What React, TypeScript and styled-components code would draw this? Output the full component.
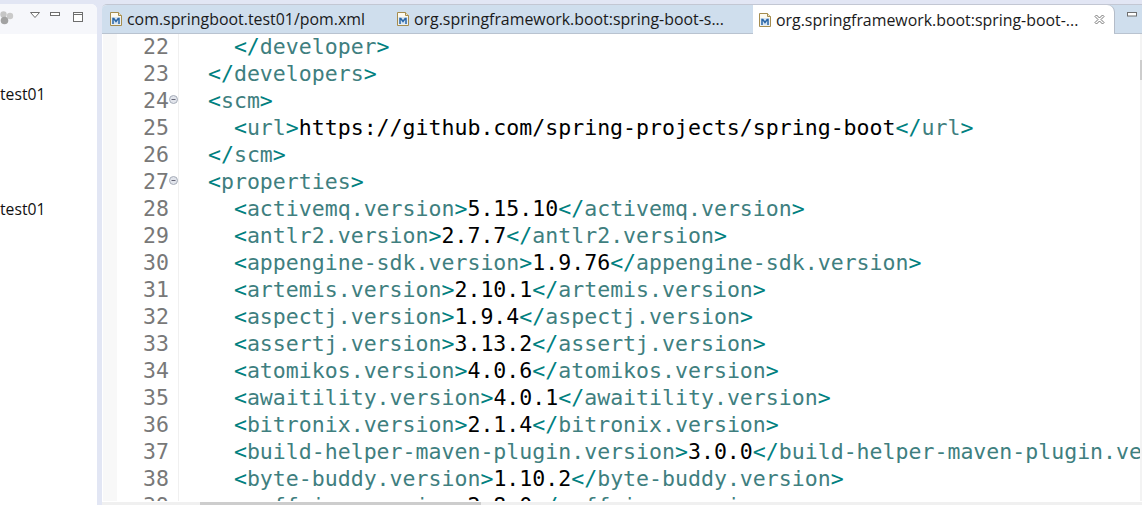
import React from "react";
import styled, { createGlobalStyle } from "styled-components";

const Global = createGlobalStyle`
  html, body { margin: 0; padding: 0; background: #fff; }
  #root { width: 1142px; height: 505px; overflow: hidden; }
`;

const Page = styled.div`
  display: flex;
  width: 1142px;
  height: 505px;
  overflow: hidden;
  background: #e2e6f4;
`;

const Sidebar = styled.aside`
  width: 97px;
  margin-top: 4px;
  flex: none;
  display: flex;
  flex-direction: column;
  background: #fff;
  border-top-right-radius: 6px;
  overflow: hidden;
  font-family: "Open Sans", sans-serif;
  font-size: 15.7px;
  color: #111;
`;

const SideHeader = styled.div`
  height: 30px;
  flex: none;
  display: flex;
  align-items: flex-start;
  padding-top: 7px;
  box-sizing: border-box;
  background: #f6f7fb;
`;

const SideList = styled.div`
  display: flex;
  flex-direction: column;
  gap: 95px;
  padding: 50px 0 0 0;
  line-height: 20px;
`;

const Divider = styled.div`
  width: 5px;
  flex: none;
`;

const EditorPane = styled.main`
  flex: 1;
  min-width: 0;
  margin-top: 4px;
  display: flex;
  flex-direction: column;
  background: #fff;
  border-top: 1px solid #c3c7d3;
  border-top-left-radius: 5px;
  overflow: hidden;
`;

const TabBar = styled.div`
  height: 29px;
  flex: none;
  display: flex;
  background: #cfdeed;
  font-family: "Open Sans", sans-serif;
  font-size: 15.9px;
  color: #1a1a1a;
`;

const Tab = styled.div<{ $w: number; $inset: number; $active?: boolean }>`
  width: ${(p) => p.$w}px;
  flex: none;
  display: flex;
  align-items: center;
  gap: 5px;
  padding-left: ${(p) => p.$inset}px;
  box-sizing: border-box;
  white-space: nowrap;
  overflow: hidden;
  background: ${(p) => (p.$active ? "#fff" : "transparent")};
  border-bottom: ${(p) => (p.$active ? "none" : "1px solid #b9c3d0")};
  border-top-right-radius: ${(p) => (p.$active ? "7px" : "0")};
  box-shadow: ${(p) => (p.$active ? "1px 0 0 #b4bcc8" : "none")};
`;

const TabLabel = styled.span`
  flex: none;
`;

const TabClose = styled.svg`
  width: 11px;
  height: 11px;
  margin-left: 11px;
  flex: none;
`;

const TabRest = styled.div`
  flex: 1;
  display: flex;
  justify-content: flex-end;
  padding: 7px 5px 0 0;
  border-bottom: 1px solid #b9c3d0;
`;

const EditorBody = styled.div`
  flex: 1;
  min-height: 0;
  display: flex;
  flex-direction: column;
  background: #fff;
`;

const EditorRow = styled.div`
  flex: 1;
  min-height: 0;
  display: flex;
`;

const Ruler = styled.div`
  width: 14px;
  margin-left: 1px;
  flex: none;
  background: #f8f8f8;
`;

const Gutter = styled.div`
  width: 61px;
  flex: none;
  border-right: 1px solid #f0f0f0;
  overflow: hidden;
`;

const NumberRow = styled.div`
  position: relative;
  height: 27px;
  padding-left: 26px;
  font: 21.5px/25px "DejaVu Sans Mono", monospace;
  color: #787878;
`;

const FoldMark = styled.svg`
  position: absolute;
  left: 52px;
  top: 7px;
  width: 9px;
  height: 9px;
`;

const Code = styled.pre`
  flex: 1;
  min-width: 0;
  margin: 0;
  padding-left: 3px;
  overflow: hidden;
  font: 21.55px/25px "DejaVu Sans Mono", monospace;
  color: #000;
`;

const CodeLine = styled.div`
  height: 27px;
  white-space: pre;
`;

const Bracket = styled.span`
  color: #008080;
`;

const TagName = styled.span`
  color: #3f7f7f;
`;

const VScroll = styled.div`
  width: 2px;
  flex: none;
  background: #f3f3f3;
  padding-top: 26px;
`;

const VThumb = styled.div`
  height: 20px;
  background: #cdcdcd;
`;

const HScroll = styled.div`
  height: 4px;
  flex: none;
  box-sizing: border-box;
  display: flex;
  background: #f0f0f0;
  border-top: 1px solid #fff;
  padding-left: 98px;
`;

const HThumb = styled.div`
  width: 281px;
  background: #cdcdcd;
`;

const MavenIcon = () => (
  <svg width="12" height="14" viewBox="0 0 12 14" style={{ flex: "none" }}>
    <path d="M.5.5h8l3 3v10H.5z" fill="#fdfaf0" stroke="#a58c4e" />
    <path d="M8.5.5v3h3" fill="#efe6c8" stroke="#a58c4e" />
    <rect x="1.5" y="5" width="9" height="7.5" fill="#d6e4f2" />
    <path d="M3 12V6.5h.8L6 9.5l2.2-3H9V12" fill="none" stroke="#2a66a6" strokeWidth="1.5" />
  </svg>
);

const Line = ({ indent, tag, value }: { indent: number; tag: string; value?: string }) => {
  const pad = " ".repeat(indent);
  if (tag.startsWith("/"))
    return (
      <CodeLine>
        {pad}
        <Bracket>&lt;/</Bracket>
        <TagName>{tag.slice(1)}</TagName>
        <Bracket>&gt;</Bracket>
      </CodeLine>
    );
  return (
    <CodeLine>
      {pad}
      <Bracket>&lt;</Bracket>
      <TagName>{tag}</TagName>
      <Bracket>&gt;</Bracket>
      {value !== undefined && (
        <>
          {value}
          <Bracket>&lt;/</Bracket>
          <TagName>{tag}</TagName>
          <Bracket>&gt;</Bracket>
        </>
      )}
    </CodeLine>
  );
};

const lines: { indent: number; tag: string; value?: string; fold?: boolean }[] = [
  { indent: 4, tag: "/developer" },
  { indent: 2, tag: "/developers" },
  { indent: 2, tag: "scm", fold: true },
  { indent: 4, tag: "url", value: "https://github.com/spring-projects/spring-boot" },
  { indent: 2, tag: "/scm" },
  { indent: 2, tag: "properties", fold: true },
  { indent: 4, tag: "activemq.version", value: "5.15.10" },
  { indent: 4, tag: "antlr2.version", value: "2.7.7" },
  { indent: 4, tag: "appengine-sdk.version", value: "1.9.76" },
  { indent: 4, tag: "artemis.version", value: "2.10.1" },
  { indent: 4, tag: "aspectj.version", value: "1.9.4" },
  { indent: 4, tag: "assertj.version", value: "3.13.2" },
  { indent: 4, tag: "atomikos.version", value: "4.0.6" },
  { indent: 4, tag: "awaitility.version", value: "4.0.1" },
  { indent: 4, tag: "bitronix.version", value: "2.1.4" },
  { indent: 4, tag: "build-helper-maven-plugin.version", value: "3.0.0" },
  { indent: 4, tag: "byte-buddy.version", value: "1.10.2" },
  { indent: 4, tag: "caffeine.version", value: "2.8.0" },
];

export default function App() {
  return (
    <Page>
      <Global />
      <Sidebar>
        <SideHeader>
          <svg width="86" height="15" viewBox="0 0 86 15" style={{ flex: "none" }}>
            <circle cx="3.5" cy="3.5" r="3.2" fill="#c6c6c6" />
            <circle cx="10" cy="5" r="3.2" fill="#cacaca" />
            <circle cx="4.5" cy="9.5" r="3.8" fill="#a2a2a2" />
            <path d="M30.5 1.5h9l-4.5 5z" fill="#fff" stroke="#6e6e6e" />
            <rect x="50.5" y="1.5" width="9" height="3" fill="#fff" stroke="#6e6e6e" />
            <rect x="73.5" y="1.5" width="9" height="9" fill="#fff" stroke="#6e6e6e" />
            <path d="M73.5 3.5h9" stroke="#6e6e6e" />
          </svg>
        </SideHeader>
        <SideList>
          <span>test01</span>
          <span>test01</span>
        </SideList>
      </Sidebar>
      <Divider />
      <EditorPane>
        <TabBar>
          <Tab $w={283} $inset={8}>
            <MavenIcon />
            <TabLabel>com.springboot.test01/pom.xml</TabLabel>
          </Tab>
          <Tab $w={368} $inset={12}>
            <MavenIcon />
            <TabLabel>org.springframework.boot:spring-boot-s...</TabLabel>
          </Tab>
          <Tab $w={361} $inset={6} $active>
            <MavenIcon />
            <TabLabel>org.springframework.boot:spring-boot-...</TabLabel>
            <TabClose viewBox="0 0 11 11">
              <path d="M1 2.5 2.5 1 5.5 4 8.5 1 10 2.5 7 5.5 10 8.5 8.5 10 5.5 7 2.5 10 1 8.5 4 5.5z" fill="#fff" stroke="#777" />
            </TabClose>
          </Tab>
          <TabRest>
            <svg width="10" height="5" viewBox="0 0 10 5">
              <rect x=".5" y=".5" width="9" height="3.5" fill="#fff" stroke="#6e6e6e" />
            </svg>
          </TabRest>
        </TabBar>
        <EditorBody>
          <EditorRow>
            <Ruler />
            <Gutter>
              {lines.map((l, i) => (
                <NumberRow key={i}>
                  {22 + i}
                  {l.fold && (
                    <FoldMark viewBox="0 0 9 9">
                      <circle cx="4.5" cy="4.5" r="4" fill="#e2e5ec" stroke="#a5acb8" />
                      <path d="M2.5 4.5h4" stroke="#667" />
                    </FoldMark>
                  )}
                </NumberRow>
              ))}
            </Gutter>
            <Code>
              {lines.map((l, i) => (
                <Line key={i} indent={l.indent} tag={l.tag} value={l.value} />
              ))}
            </Code>
            <VScroll>
              <VThumb />
            </VScroll>
          </EditorRow>
          <HScroll>
            <HThumb />
          </HScroll>
        </EditorBody>
      </EditorPane>
    </Page>
  );
}
